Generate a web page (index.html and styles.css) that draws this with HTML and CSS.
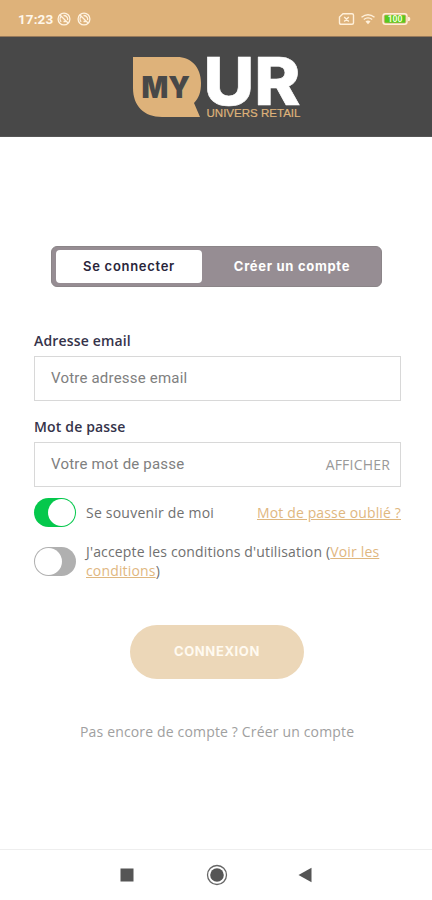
FILE: index.html
```html
<!DOCTYPE html>
<html lang="fr">
<head>
<meta charset="utf-8">
<title>MY UR – Connexion</title>
<link rel="stylesheet" href="styles.css">
</head>
<body>
<div class="status">
  <span class="time">17:23</span>
  <svg class="app-icon" width="14" height="14" viewBox="0 0 14 14"><circle cx="7" cy="7" r="5.9"/><path d="M4.200 9.800A4 4 0 0 1 4.200 4.200M6.500 3.500a3.800 3.800 0 0 1 4.100 4.600M3 3l8 8M6.500 9.500h2.200"/></svg>
  <svg class="app-icon second" width="14" height="14" viewBox="0 0 14 14"><circle cx="7" cy="7" r="5.9"/><path d="M4.200 9.800A4 4 0 0 1 4.200 4.200M6.500 3.500a3.800 3.800 0 0 1 4.100 4.600M3 3l8 8M6.500 9.500h2.200"/></svg>
  <svg class="system" width="74" height="16" viewBox="0 0 74 16">
    <path class="line" d="M5 2.700h9q1.500 0 1.500 1.500v7.600q0 1.500-1.500 1.500H3q-1.500 0-1.500-1.500V6zM6.200 6l4.600 4.600M10.800 6l-4.600 4.600"/>
    <path class="line wifi" d="M23.500 6.200q6.500-5 13 0M25.800 8.500q4.200-3.300 8.400 0"/><path class="fill" d="M27.500 10.500q2.500-2 5 0L30 13.200z"/>
    <rect class="line" x="45" y="2.700" width="24" height="10.600" rx="2.500"/>
    <rect class="charge" x="46.700" y="4.300" width="20.600" height="7.400" rx="1"/>
    <path class="fill" d="M70 6h1q1.300 0 1.300 2T71 10h-1z"/>
    <text class="level" x="57" y="11.200" text-anchor="middle">100</text>
  </svg>
</div>
<header class="header">
  <svg width="174" height="99" viewBox="130 37 174 99">
    <path class="bubble" d="M133 57h44c14 0 24 10 24 26 0 9-2 15-7 20l6 14h-38c-18 0-29-11-29-29z"/>
    <text class="my" x="141.500" y="98" textLength="48.500" lengthAdjust="spacingAndGlyphs">MY</text>
    <text class="ur" x="203.500" y="105" textLength="97" lengthAdjust="spacingAndGlyphs">UR</text>
    <text class="univers" x="206.500" y="116.500" textLength="94" lengthAdjust="spacingAndGlyphs">UNIVERS RETAIL</text>
  </svg>
</header>
<main class="content">
  <div class="tabs"><div class="tab active">Se connecter</div><div class="tab">Créer un compte</div></div>
  <label class="label">Adresse email</label>
  <div class="field"><span>Votre adresse email</span></div>
  <label class="label">Mot de passe</label>
  <div class="field"><span class="password">Votre mot de passe</span><span class="show">AFFICHER</span></div>
  <div class="row remember"><span class="switch on"></span><span class="remember-text">Se souvenir de moi</span><a class="forgot">Mot de passe oublié ?</a></div>
  <div class="row terms"><span class="switch"></span><p>J'accepte les conditions d'utilisation (<a>Voir les<br>conditions</a>)</p></div>
  <div class="submit">CONNEXION</div>
  <p class="signup">Pas encore de compte ? Créer un compte</p>
</main>
<nav class="nav">
  <svg width="432" height="50" viewBox="0 0 432 50"><rect x="120.500" y="18.500" width="13" height="13"/><circle class="ring" cx="217" cy="25" r="9.500"/><circle cx="217" cy="25" r="6.800"/><path d="M298.500 25l13-7.200v14.400z"/></svg>
</nav>
</body>
</html>
```
FILE: styles.css
```css
* { box-sizing: border-box; }
body { margin: 0; width: 432px; height: 900px; display: flex; flex-direction: column; background: #fff; font-family: "Open Sans", sans-serif; font-size: 14px; letter-spacing: .16px; color: #707070; }
p { margin: 0; }
.status { height: 37px; flex: none; display: flex; align-items: center; padding: 2px 20px 0 18px; background: #deb27a; border-bottom: 1px solid #97795a; }
.time { font: 700 13.5px Roboto, sans-serif; color: #fff7ea; width: 39px; letter-spacing: .1px; }
.app-icon { fill: none; stroke: #fff2df; stroke-width: 1.3; }
.second { margin-left: 6px; }
.system { margin-left: auto; letter-spacing: 0; }
.line { fill: none; stroke: #fff0da; stroke-width: 1.4; }
.fill { fill: #fff0da; }
.charge { fill: #58c91e; }
.level { font: 700 8.5px Roboto, sans-serif; fill: #f5ffd8; }
.header { height: 100px; flex: none; display: flex; justify-content: center; padding-left: 2px; background: #484848; border-bottom: 1px solid #555; letter-spacing: 0; }
.header svg { display: block; overflow: visible; }
.my { font: 900 30px Inter, sans-serif; fill: #484848; }
.ur { font: 800 66px Inter, sans-serif; fill: #fff; stroke: #fff; stroke-width: .6; }
.bubble, .univers { fill: #deb27a; }
.univers { font: 400 11px "Liberation Sans", sans-serif; stroke: #deb27a; stroke-width: .2; }
.content { flex: 1; padding: 109px 31px 0 34px; display: flex; flex-direction: column; }
.tabs { width: 331px; height: 41px; margin-left: 17px; display: flex; padding: 3px 4px; background: #968d93; border: 1px solid #8b8588; border-radius: 6px; font: 700 13px Inter, sans-serif; letter-spacing: .7px; color: #fff; }
.tab { flex: 1; display: flex; align-items: center; justify-content: center; padding: 0 0 2px 5px; }
.active { flex: 0 0 146px; padding: 0 0 2px; background: #fff; border-radius: 4px; color: #29253a; font-weight: 600; }
.label { height: 20px; margin: 44px 0 5px; line-height: 20px; font-weight: 600; color: #35334a; }
.field + .label { margin-top: 16px; }
.field { height: 45px; display: flex; align-items: center; justify-content: space-between; padding: 0 10px 1px 16px; border: 1px solid #d8d8d8; font: 400 15px Roboto, sans-serif; color: #808080; letter-spacing: .2px; }
.show { font: 400 14px "Open Sans", sans-serif; color: #999; }
.row { display: flex; }
.remember { height: 29px; margin-top: 11px; align-items: center; }
.remember-text { letter-spacing: .22px; }
.switch { width: 42px; height: 29px; flex: none; margin-right: 10px; padding: 1px; border-radius: 15px; background: #b0b0b0; display: flex; }
.switch::after { content: ""; width: 27px; height: 27px; border-radius: 50%; background: #fff; }
.on { background: #05c84c; justify-content: flex-end; }
a { color: #dfb77f; text-decoration: underline; }
.forgot { margin-left: auto; letter-spacing: .14px; }
.terms { margin-top: 16px; height: 42px; }
.terms .switch { margin-top: 4px; }
.terms p { margin-top: -1px; line-height: 19px; white-space: nowrap; }
.submit { width: 174px; height: 54px; margin: 40px 0 0 96px; padding-bottom: 2px; border-radius: 27px; display: flex; align-items: center; justify-content: center; background: #ecd7b8; color: #fffaf0; font: 700 13px Inter, sans-serif; letter-spacing: .6px; }
.signup { margin: 43px 0 0 46px; line-height: 20px; color: #a0a0a0; white-space: nowrap; }
.nav { height: 51px; flex: none; border-top: 1px solid #eee; }
.nav svg { display: block; fill: #555; }
.nav .ring { fill: none; stroke: #666; stroke-width: 1.3; }
```
